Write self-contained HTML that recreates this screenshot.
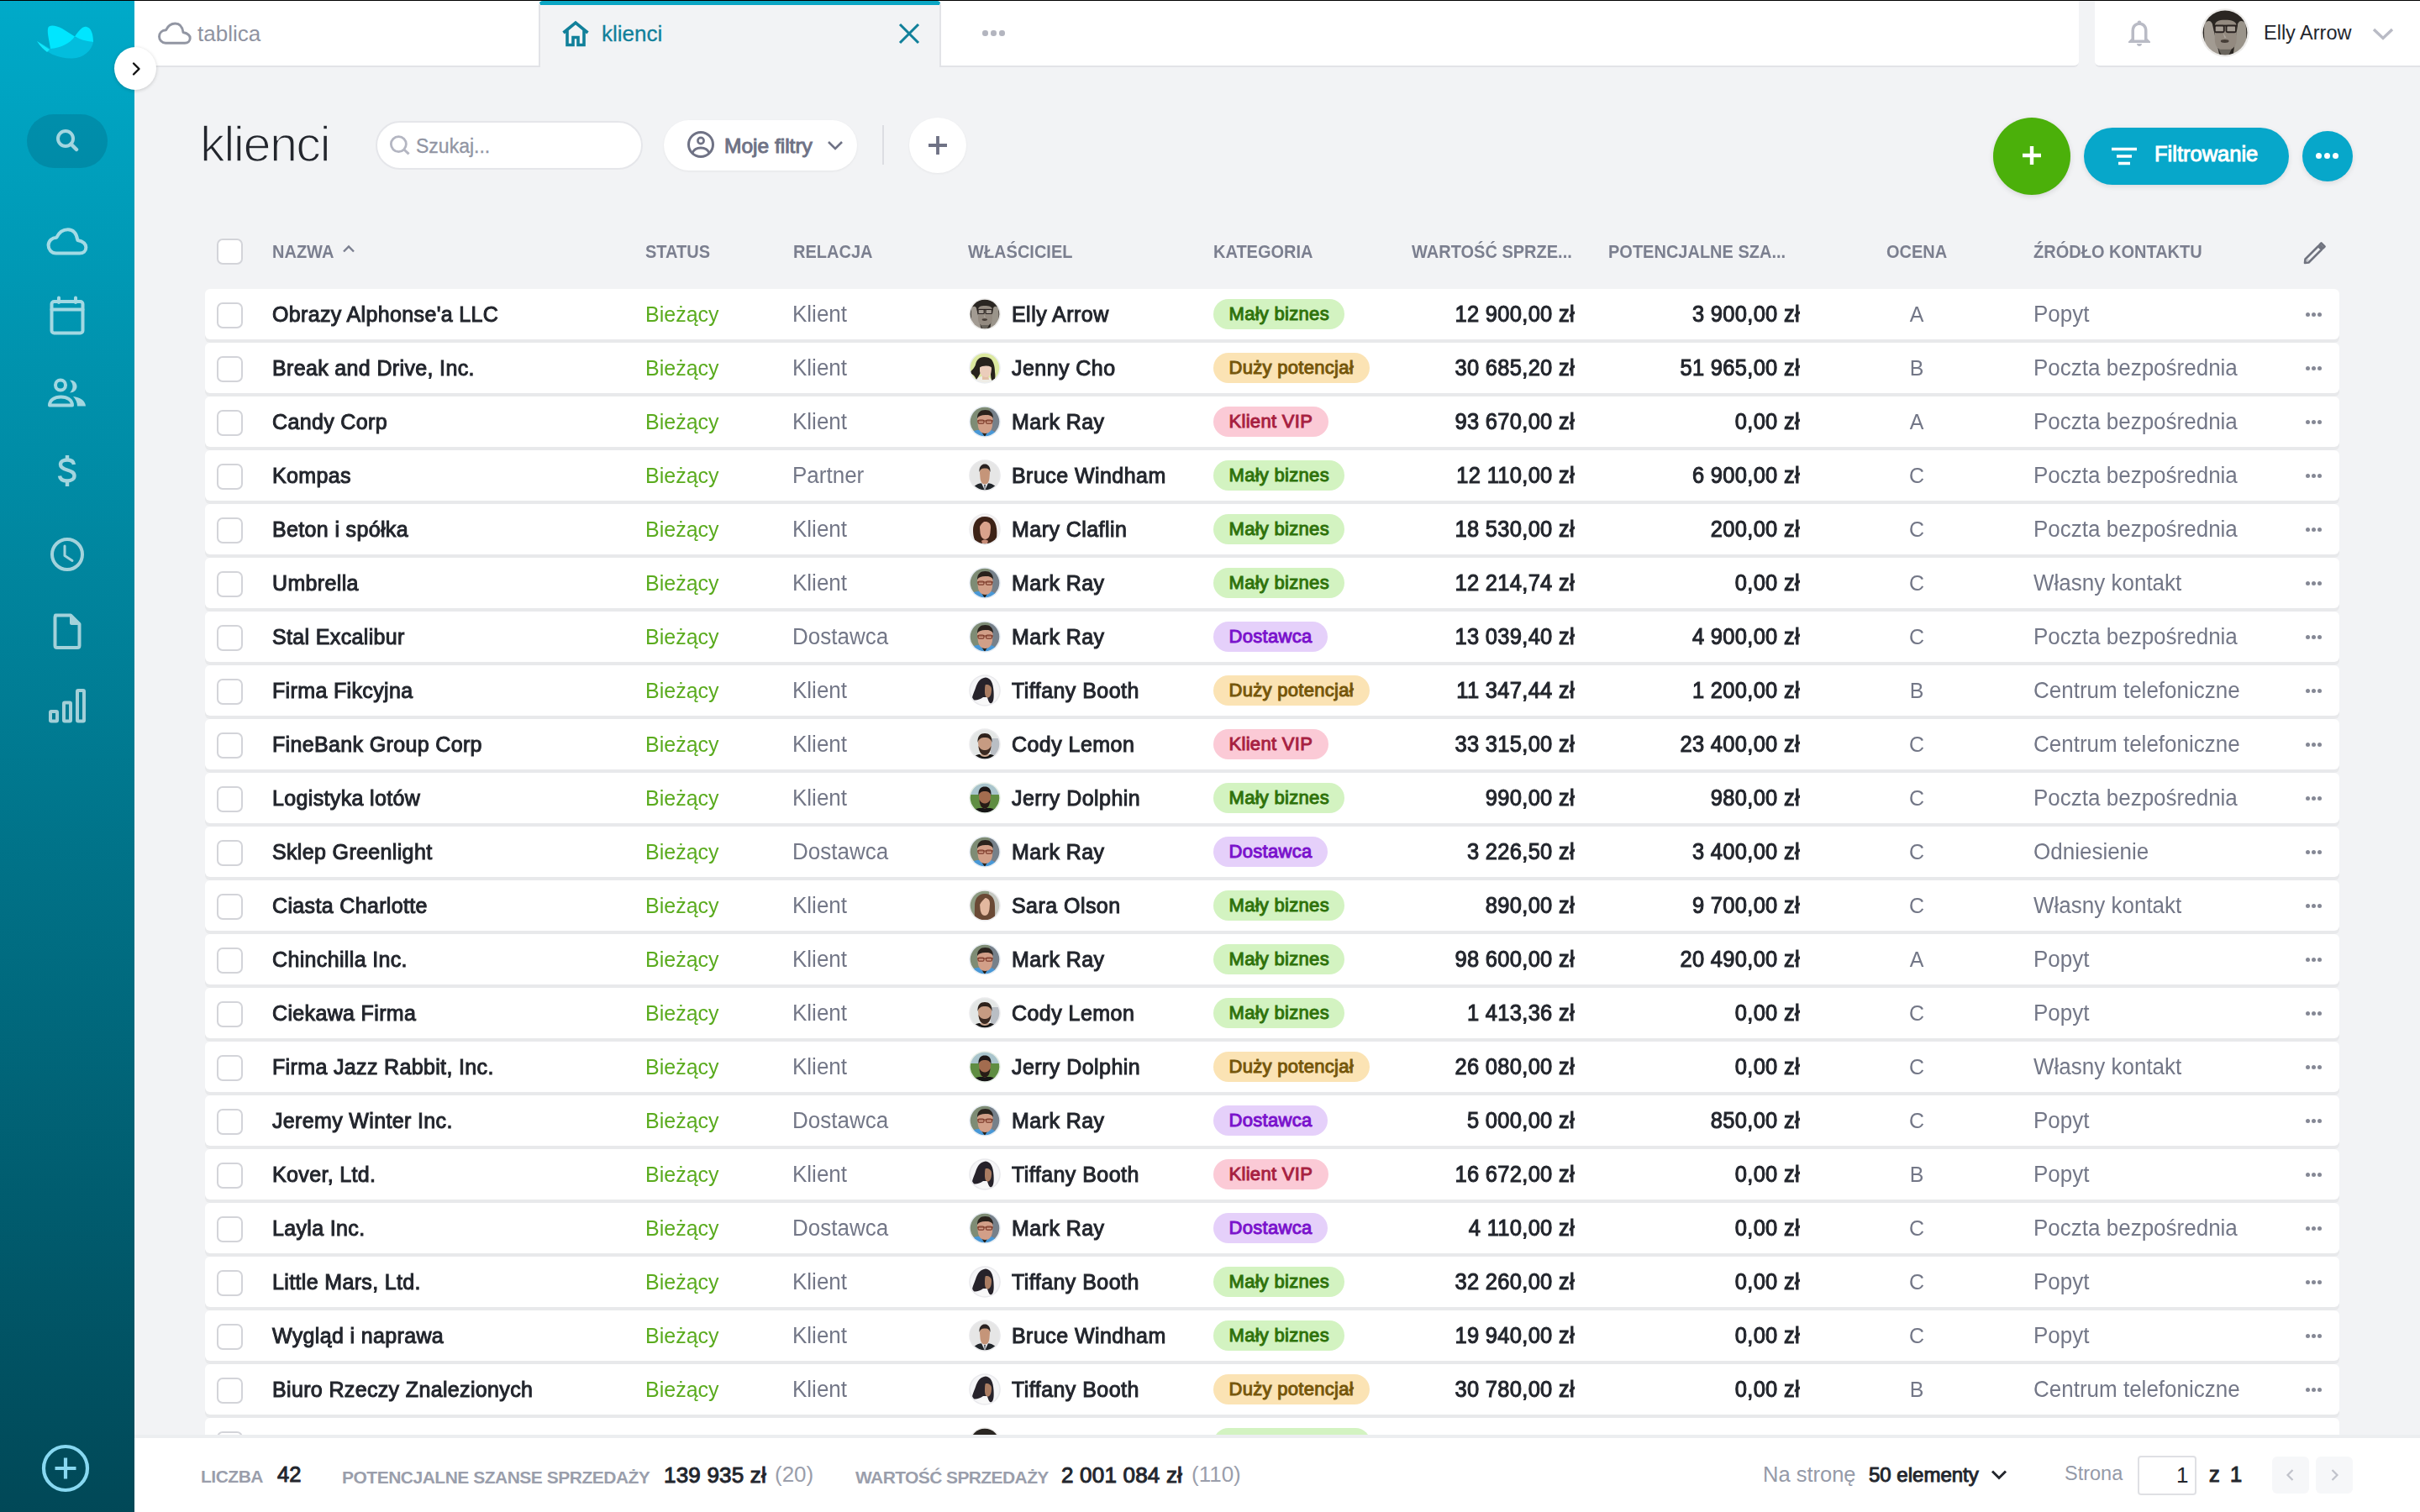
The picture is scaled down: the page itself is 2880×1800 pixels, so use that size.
<!DOCTYPE html>
<html><head><meta charset="utf-8">
<style>
*{box-sizing:border-box;margin:0;padding:0}
html,body{width:2880px;height:1800px;overflow:hidden;background:#f2f3f5;font-family:"Liberation Sans",sans-serif;color:#23262d}
.abs{position:absolute}
#topline{position:absolute;left:0;top:0;width:2880px;height:1px;background:#000;z-index:20}
#side{position:absolute;left:0;top:0;width:160px;height:1800px;background:linear-gradient(180deg,#00aac9 0%,#014857 100%);z-index:5}
#side svg{position:absolute}
.sic{fill:none;stroke:#fff;stroke-width:4;stroke-linecap:round;stroke-linejoin:round}
#tabbar{position:absolute;left:160px;top:0;width:2314px;height:80px;background:#fff;border-bottom:2px solid #e2e3e7;border-bottom-right-radius:6px}
#userbar{position:absolute;left:2493px;top:0;width:387px;height:80px;background:#fff;border-bottom:2px solid #e2e3e7;border-bottom-left-radius:6px}
#acttab{position:absolute;left:641px;top:1px;width:479px;height:79px;background:#f2f3f5;border-left:2px solid #e2e3e7;border-right:2px solid #e2e3e7;border-top:5px solid #0aa6c4;border-radius:5px 5px 0 0;z-index:2}
.t{position:absolute;white-space:nowrap;line-height:1}
.med{-webkit-text-stroke:1px currentColor}
#toggle{position:absolute;left:136px;top:56px;width:50px;height:51px;border-radius:50%;background:#fff;box-shadow:0 1px 4px rgba(0,0,0,0.18);z-index:10}
.pill{position:absolute;background:#fff;border-radius:40px}
.hdr{position:absolute;top:0;font-weight:bold;font-size:20px;color:#7b7f8f;line-height:1;white-space:nowrap;transform:scaleY(1.09);transform-origin:0 17px}
.card{position:absolute;left:244px;width:2540px;height:60px;background:#fff;border-radius:6px;box-shadow:0 4px 0 #e8e9eb}
.card .t{line-height:60px;top:0;transform:scaleY(1.06);transform-origin:0 38.7px}
.cb{position:absolute;left:14px;top:16px;width:31px;height:31px;border:2px solid #d3d4d9;border-radius:7px;background:#fff}
.nm{left:80px;font-size:25px;color:#23262d;letter-spacing:0.35px}
.st{left:524px;font-size:25px;color:#5aab1e}
.rl{left:699px;font-size:26px;color:#737787}
.av{position:absolute;left:909px;top:11px;width:38px;height:38px}
.ow{left:960px;font-size:25px;color:#23262d;letter-spacing:0.45px}
.bd{position:absolute;left:1200px;top:12px;height:36px;border-radius:18px;font-size:22px;line-height:36px;padding:0 18.5px;white-space:nowrap;letter-spacing:0.3px}
.b1{background:#d3f3c1;color:#2f720b}
.b2{background:#fbe3b4;color:#75560a}
.b3{background:#fbcad6;color:#a71f41}
.b4{background:#e5d0fa;color:#7a12cc}
.v1{right:910px;font-size:25.5px;color:#23262d;letter-spacing:0.3px}
.v2{right:642px;font-size:25.5px;color:#23262d;letter-spacing:0.3px}
.oc{left:1987px;width:100px;text-align:center;font-size:25px;color:#737787}
.zr{left:2176px;font-size:26px;color:#737787}
.dots{position:absolute;left:2500px;top:27px;width:20px;height:6px}
.dots i,.hdots i{position:absolute;top:0.5px;width:5px;height:5px;border-radius:50%;background:#858895}
#footer{position:absolute;left:160px;top:1708px;width:2720px;height:92px;background:#fff;border-top:4px solid #eceef0;z-index:4}
</style></head><body>
<svg width="0" height="0" style="position:absolute">
<defs>
<clipPath id="cc"><circle cx="19" cy="19" r="17.3"/></clipPath><filter id="bl" x="-10%" y="-10%" width="120%" height="120%"><feGaussianBlur stdDeviation="0.45"/></filter>
<symbol id="av-elly" viewBox="0 0 38 38"><circle cx="19" cy="19" r="18.8" fill="#ecebe9"/><g clip-path="url(#cc)"><g filter="url(#bl)"><rect width="38" height="38" fill="#2b2723"/><path d="M3,12 C5,9 8,9 9,12 L15,38 L6,38 C3,30 2,20 3,12 Z" fill="#a29b92"/><path d="M35,12 C33,9 30,9 29,12 L25,38 L33,38 C36,30 36,20 35,12 Z" fill="#9a948a"/><path d="M11,14 C11,10 14,9 19,9 C24,9 28,10 28,14 L28,24 C28,30 24,33 19,33 C14,33 11,30 11,24 Z" fill="#938a80"/><path d="M14,32 L24,32 L21,38 L17,38 Z" fill="#6b655d"/><path d="M10.5,13.5 H28.5" stroke="#2a2420" stroke-width="1.3"/><rect x="11" y="13.5" width="7.2" height="5" rx="1" fill="#a49c93" stroke="#2a2420" stroke-width="1.2"/><rect x="20" y="13.5" width="7.5" height="5" rx="1" fill="#a49c93" stroke="#2a2420" stroke-width="1.2"/><ellipse cx="18.8" cy="25.6" rx="3.2" ry="1.3" fill="#453c36"/><path d="M17.5,19 L18.5,23 L20,23 Z" fill="#b0a89f"/></g></g></symbol>
<symbol id="av-jenny" viewBox="0 0 38 38"><circle cx="19" cy="19" r="18.8" fill="#eceef0"/><g clip-path="url(#cc)"><g filter="url(#bl)"><rect width="38" height="38" fill="#dce9a0"/><path d="M5,38 C6,33 10,30 16,29 L24,30 C27,32 28,35 28,38 Z" fill="#efede6"/><path d="M16,27 L23,27 L24,33 L16,33 Z" fill="#e2c0a6"/><path d="M18,6 C12,6 9,10 8,15 C7,19 3,22 1,25 C4,26 7,28 9,33 C11,30 13,27 14,24 L26,24 C26,28 26,33 29,36 C31,34 32,30 31,24 C31,16 29,12 27,9 C25,7 22,6 18,6 Z" fill="#27221f"/><path d="M13,19 C13,16 15,15 20,15.5 C25,16 27,17 27,20 L26.5,24 C26,28 23,30 20,30 C16.5,30 13.5,27 13,23 Z" fill="#ebcdbb"/><path d="M12,17 C14,12 22,11 27,14 L27,18 C22,16 17,16 12,19 Z" fill="#27221f"/></g></g></symbol>
<symbol id="av-mark" viewBox="0 0 38 38"><circle cx="19" cy="19" r="18.8" fill="#e6ecf2"/><g clip-path="url(#cc)"><g filter="url(#bl)"><rect width="38" height="38" fill="#7e8c74"/><rect x="25" y="0" width="13" height="38" fill="#76808a"/><path d="M0,38 C1,31 6,29 12,29 L26,29 C31,30 34,33 34,38 Z" fill="#4a98d6"/><path d="M13,28 C15,31 19,37 19,37 C21,33 23,30 25,28 Z" fill="#23201e"/><path d="M10,17 C10,10 14,7 19.5,7 C25,7 28.5,10 28.5,17 L28,24 C27,30 24,33 19.5,33 C15,33 12,30 11,25 Z" fill="#d29f88"/><path d="M10,15 C10,8 14,5 19.5,5 C25,5 29,8 29,15 C27,11.5 24,11 19.5,11 C15,11 12,12 10,15 Z" fill="#29231f"/><path d="M10,18 H29" stroke="#7a3828" stroke-width="1"/><rect x="11" y="17" width="7" height="4.2" rx="1.5" fill="none" stroke="#7a3828" stroke-width="1.2"/><rect x="20.5" y="17" width="7" height="4.2" rx="1.5" fill="none" stroke="#7a3828" stroke-width="1.2"/></g></g></symbol>
<symbol id="av-bruce" viewBox="0 0 38 38"><circle cx="19" cy="19" r="18.8" fill="#e8e8ea"/><g clip-path="url(#cc)"><g filter="url(#bl)"><rect width="38" height="38" fill="#e6e6e6"/><path d="M3,38 C5,31 10,28 19,28 C28,28 33,31 35,38 Z" fill="#22252b"/><path d="M15,28 L19,37 L23,28 Z" fill="#e6eaef"/><path d="M18.2,30 L19,37 L19.8,30 Z" fill="#2b2f36"/><path d="M13,16 C13,10 15.5,7.5 19,7.5 C22.5,7.5 25,10 25,16 L24.5,22 C24,27 22,29.5 19,29.5 C16,29.5 14,27 13.5,22 Z" fill="#c59579"/><path d="M12.5,15 C12,8 15.5,5.5 19,5.5 C22.5,5.5 26,8 25.5,15 C24,11 22,10.5 19,10.5 C16,10.5 14,11 12.5,15 Z" fill="#2a2420"/></g></g></symbol>
<symbol id="av-mary" viewBox="0 0 38 38"><circle cx="19" cy="19" r="18.8" fill="#ededef"/><g clip-path="url(#cc)"><g filter="url(#bl)"><rect width="38" height="38" fill="#f2efee"/><path d="M19,4 C9,4 5,12 5,20 C5,28 7,34 11,38 L30,38 C33,33 34,26 33,18 C32,10 28,4 19,4 Z" fill="#3d2019"/><path d="M13,17 C13,12 15.5,10 19.5,10 C23.5,10 26,12 26,17 L25.5,23 C25,28 22.5,31 19.5,31 C16.5,31 14,28 13.5,23 Z" fill="#d9a28c"/><path d="M12,15 C13,9 17,7 21,8 C17,10 14,13 12,18 Z" fill="#3d2019"/><path d="M15,33 C17,31 21,31 23,33 L22,36 L16,36 Z" fill="#c78d78"/></g></g></symbol>
<symbol id="av-tiffany" viewBox="0 0 38 38"><circle cx="19" cy="19" r="18.8" fill="#e9e9ec"/><g clip-path="url(#cc)"><g filter="url(#bl)"><rect width="38" height="38" fill="#f5f5f7"/><path d="M8,38 C10,33 14,30 19,30 C25,30 29,33 31,38 Z" fill="#f8f8f8"/><path d="M20,3.5 C14,4 10,9 8,16 C6,22 3,27 4.5,30 C8,31.5 13,30 17,27 L22,27 C23,31 24,34 26.5,34.5 C29.5,33 30,28 29.5,20 C29,10 26,4 20,3.5 Z" fill="#25222a"/><path d="M20,12 C23,11.5 27,13 27,18 C27,23 25.5,27 23,27.5 C20.5,28 19,25 19,21 C19,17 19,13 20,12 Z" fill="#a97c62"/></g></g></symbol>
<symbol id="av-cody" viewBox="0 0 38 38"><circle cx="19" cy="19" r="18.8" fill="#ebebed"/><g clip-path="url(#cc)"><g filter="url(#bl)"><rect width="38" height="38" fill="#e3e6e5"/><rect x="26" y="12" width="12" height="22" fill="#b9bec4"/><path d="M2,38 C4,33 9,31 14,31 L24,31 C29,31 33,33 35,38 Z" fill="#161312"/><path d="M13,31 C15,35 23,35 25,31 Z" fill="#c9a690"/><path d="M11,17 C11,10 14.5,8 19,8 C23.5,8 27,10 27,17 L26.5,22 C26,28 23,32 19,32 C15,32 12,28 11.5,22 Z" fill="#c69b82"/><path d="M11.5,21 C12,28 15,32 19,32 C23,32 26,28 26.5,21 C24.5,25 22,26 19,26 C16,26 13.5,25 11.5,21 Z" fill="#3a2a21"/><path d="M10.5,17 C10,9 14,6 19,6 C24,6 28,9 27.5,17 C26,12 23,11 19,11 C15,11 12,12 10.5,17 Z" fill="#2e221b"/></g></g></symbol>
<symbol id="av-jerry" viewBox="0 0 38 38"><circle cx="19" cy="19" r="18.8" fill="#e6eee6"/><g clip-path="url(#cc)"><g filter="url(#bl)"><rect width="38" height="38" fill="#5e8d43"/><rect width="38" height="15" fill="#a9c4cc"/><path d="M2,38 C4,33 9,31 14,31 L24,31 C29,31 33,33 35,38 Z" fill="#181414"/><path d="M12,17 C12,11 15,9 19,9 C23,9 26,11 26,17 L25.5,22 C25,28 22.5,31.5 19,31.5 C15.5,31.5 13,28 12.5,22 Z" fill="#a36c50"/><path d="M12.5,21 C13,28 15.5,31.5 19,31.5 C22.5,31.5 25,28 25.5,21 C23.5,24.5 21.5,25.5 19,25.5 C16.5,25.5 14.5,24.5 12.5,21 Z" fill="#251b17"/><path d="M11.5,16 C11,8 14.5,5.5 19,5.5 C23.5,5.5 27,8 26.5,16 C25,12 22.5,11 19,11 C15.5,11 13,12 11.5,16 Z" fill="#1f1917"/></g></g></symbol>
<symbol id="av-sara" viewBox="0 0 38 38"><circle cx="19" cy="19" r="18.8" fill="#ecebed"/><g clip-path="url(#cc)"><g filter="url(#bl)"><rect width="38" height="38" fill="#8d9b82"/><rect x="24" y="0" width="14" height="38" fill="#c4c7c0"/><path d="M6,38 C8,33 13,31 19,31 C25,31 30,33 32,38 Z" fill="#efebe7"/><path d="M19,5 C10,5 7,12 7,20 C7,28 6,33 9,36 L29,36 C32,33 31,28 31,20 C31,12 28,5 19,5 Z" fill="#6b4836"/><path d="M13,17 C13,12 15.5,10 19,10 C22.5,10 25,12 25,17 L24.5,23 C24,28 22,31 19,31 C16,31 14,28 13.5,23 Z" fill="#e3b89f"/><path d="M12,16 C13,10 17,8.5 21,9 C18,11 15,14 12.5,19 Z" fill="#6b4836"/></g></g></symbol>
</defs></svg>
<div id="topline"></div>
<!-- SIDEBAR -->
<div id="side">
  <svg style="left:36px;top:20px" width="90" height="60" viewBox="0 0 90 60">
    <path d="M8,29 C18,44 35,50 50,49.5 C64,49 73,40 75,30 L53,24 L24,38 Z" fill="#03bddd"/>
    <path d="M21,14 C22,9 30,10 38,14 L53,23.5 C47,32 36,37 24,38 C23,30 20,20 21,14 Z" fill="#00e6ff"/>
    <path d="M53,23.5 C58,16 63,11 67,12 C73,13 75,22 75,30 C66,29 59,27 53,23.5 Z" fill="#00e6ff"/>
    <path d="M8,29 C12,35 16,39 20,42 L23,39 Z" fill="#10e8fb"/>
  </svg>
  <div class="abs" style="left:32px;top:136px;width:96px;height:64px;border-radius:32px;background:rgba(0,40,60,0.16)"></div>
  <svg style="left:60px;top:148px;opacity:.64" width="40" height="40" viewBox="0 0 40 40"><g class="sic"><circle cx="18" cy="17" r="9"/><path d="M24.5,23.5 L31,30" style="stroke-width:4.5"/></g></svg>
  <!-- cloud -->
  <svg style="left:46.2px;top:261.3px;opacity:.64" width="73.2" height="53.7" viewBox="0 0 60 44"><path class="sic" style="stroke-width:3.3" d="M17,33.2 C12.5,33.2 9.5,29.5 9.5,25.5 C9.5,21 13,18 17.5,17.8 C20,12.5 24,10 28.5,10 C33.5,10 37,13.5 38,20.5 C42.5,21.5 46.2,24 46.2,27.5 C46.2,31 43.5,33.2 40,33.2 Z"/></svg>
  <!-- calendar -->
  <svg style="left:58px;top:352px;opacity:.64" width="44" height="48" viewBox="0 0 44 48"><g class="sic"><rect x="3.5" y="7" width="37" height="37.5" rx="3"/><path d="M3.5,16.5 H40.5 M12,2.5 V8 M32,2.5 V8"/></g></svg>
  <!-- people -->
  <svg style="left:55px;top:449px;opacity:.64" width="50" height="38" viewBox="0 0 50 38"><g class="sic"><circle cx="17" cy="9.5" r="6"/><path d="M4,33.5 C4,27 10,23.5 17.5,23.5 C25,23.5 31,27 31,33.5 Z"/></g><path d="M28,3.5 C33,3.5 36.5,7 36.5,11 C36.5,15 33,18.5 28,18.5 C30.5,16 31.5,13.5 31.5,11 C31.5,8.5 30.5,6 28,3.5 Z" fill="#fff"/><path d="M32,23 C40,24 46.5,27.5 47,34.5 H37 C37,30 35,26 32,23 Z" fill="#fff"/></svg>
  <!-- dollar -->
  <svg style="left:66px;top:540px;opacity:.64" width="28" height="42" viewBox="0 0 28 42"><g class="sic" style="stroke-width:4.4;stroke-linecap:butt"><path d="M22,13 C21.5,9.5 18.5,7.5 14,7.5 C9.5,7.5 6,9.5 6,13 C6,16.5 9,18 14,19.5 C19,21 22.5,22.5 22.5,26.5 C22.5,30 19,32.5 14,32.5 C9,32.5 5.5,30.5 5,26.5"/><path d="M14,2 V7.5 M14,32.5 V39"/></g></svg>
  <!-- clock -->
  <svg style="left:58px;top:638px;opacity:.64" width="44" height="44" viewBox="0 0 44 44"><g class="sic"><circle cx="22" cy="22" r="18"/><path d="M19,12 V23.5 L28,29.5" style="stroke-width:3"/></g></svg>
  <!-- document -->
  <svg style="left:61px;top:729px;opacity:.64" width="38" height="46" viewBox="0 0 38 46"><path class="sic" d="M5,3.5 H23 L33.5,14 V39.5 C33.5,41 32.5,42 31,42 H7 C5.5,42 4.5,41 4.5,39.5 V6 C4.5,4.5 5.5,3.5 7,3.5 Z"/><path d="M22,3 L34,15 H24 C23,15 22,14 22,13 Z" fill="#fff"/></svg>
  <!-- bars -->
  <svg style="left:55px;top:817px;opacity:.64" width="50" height="46" viewBox="0 0 50 46"><g class="sic" style="stroke-width:4"><rect x="5" y="30" width="8" height="11.5" rx="1"/><rect x="21" y="19.5" width="8" height="22" rx="1"/><rect x="37" y="5" width="8" height="36.5" rx="1"/></g></svg>
  <!-- plus circle -->
  <svg style="left:46px;top:1716px" width="64" height="64" viewBox="0 0 64 64"><circle cx="32" cy="32" r="26" fill="none" stroke="#88d8f1" stroke-width="4.2"/><path d="M32,19.5 V44.5 M19.5,32 H44.5" stroke="#88d8f1" stroke-width="4.2"/></svg>
</div>
<!-- TAB BAR -->
<div id="tabbar"></div>
<div id="userbar"></div>
<div id="acttab"></div>
<div id="toggle"><svg style="position:absolute;left:17px;top:17px" width="18" height="18" viewBox="0 0 18 18"><path d="M6,2.5 L12.5,9 L6,15.5" fill="none" stroke="#111" stroke-width="2.4" stroke-linecap="round" stroke-linejoin="round"/></svg></div>
<!-- tab contents -->
<svg class="abs" style="left:180px;top:18px" width="60" height="44" viewBox="0 0 60 44"><path d="M17,33.2 C12.5,33.2 9.5,29.5 9.5,25.5 C9.5,21 13,18 17.5,17.8 C20,12.5 24,10 28.5,10 C33.5,10 37,13.5 38,20.5 C42.5,21.5 46.2,24 46.2,27.5 C46.2,31 43.5,33.2 40,33.2 Z" fill="none" stroke="#9296a3" stroke-width="2.9" stroke-linejoin="round"/></svg>
<div class="t" style="left:235px;top:27px;font-size:26px;color:#8f93a1">tablica</div>
<svg class="abs" style="left:666px;top:24px;z-index:3" width="38" height="32" viewBox="0 0 38 32"><path d="M4.5,15 L19,3 L33.5,15 M9,11.5 V29.5 H16 V20.5 H22 V29.5 H29 V11.5" fill="none" stroke="#11809a" stroke-width="3.6" stroke-linejoin="miter"/></svg>
<div class="t med" style="left:716px;top:26.5px;font-size:26px;color:#11809a;z-index:3;-webkit-text-stroke:0.3px #11809a">klienci</div>
<svg class="abs" style="left:1068px;top:26px;z-index:3" width="28" height="28" viewBox="0 0 28 28"><path d="M3,3 L25,25 M25,3 L3,25" stroke="#11809a" stroke-width="3.1"/></svg>
<div class="abs hdots" style="left:1169px;top:35.5px;width:30px;height:7px"><i style="left:0;background:#b3b5bf;width:6.5px;height:6.5px"></i><i style="left:10px;background:#b3b5bf;width:6.5px;height:6.5px"></i><i style="left:20px;background:#b3b5bf;width:6.5px;height:6.5px"></i></div>
<svg class="abs" style="left:2530px;top:21px" width="32" height="36" viewBox="0 0 32 36"><path d="M16,3.5 C17.5,3.5 18.3,4.5 18.3,5.7 C23,6.8 25.5,10.5 25.5,15.5 V25 L29,28.5 V30 H3 V28.5 L6.5,25 V15.5 C6.5,10.5 9,6.8 13.7,5.7 C13.7,4.5 14.5,3.5 16,3.5 Z M10,15.5 V26.5 H22 V15.5 C22,11.5 19.5,9 16,9 C12.5,9 10,11.5 10,15.5 Z M13,31 H19 C19,32.8 17.5,34 16,34 C14.5,34 13,32.8 13,31 Z" fill="#b9bbc5" fill-rule="evenodd"/></svg>
<svg class="abs" style="left:2619px;top:10px" width="58" height="58" viewBox="0 0 38 38"><use href="#av-elly"/></svg>
<div class="t" style="left:2694px;top:28px;font-size:23.5px;color:#23262d">Elly Arrow</div>
<svg class="abs" style="left:2822px;top:31px" width="28" height="18" viewBox="0 0 28 18"><path d="M3,4 L14,14.5 L25,4" fill="none" stroke="#b9bbc5" stroke-width="3.4"/></svg>
<!-- TITLE ROW -->
<div class="t" style="left:238px;top:141.5px;font-size:59.5px;color:#23262d;letter-spacing:-1.6px;-webkit-text-stroke:1.6px #f2f3f5">klienci</div>
<div class="pill" style="left:447px;top:144px;width:318px;height:58px;border:2px solid #e5e6ea"></div>
<svg class="abs" style="left:462px;top:160px" width="28" height="28" viewBox="0 0 28 28"><circle cx="12.35" cy="11.6" r="9" fill="none" stroke="#b4b6c2" stroke-width="2.8"/><path d="M18.8,18 L24.6,23.4" stroke="#b4b6c2" stroke-width="3"/></svg>
<div class="t" style="left:495px;top:163px;font-size:23px;color:#9195a3;-webkit-text-stroke:0.3px #9195a3">Szukaj...</div>
<div class="pill" style="left:790px;top:143px;width:230px;height:60px;box-shadow:0 1px 3px rgba(0,0,0,0.06)"></div>
<svg class="abs" style="left:815px;top:153px" width="38" height="38" viewBox="0 0 38 38"><circle cx="19" cy="19" r="14.5" fill="none" stroke="#6f7285" stroke-width="3"/><circle cx="19" cy="14.5" r="3.6" fill="none" stroke="#6f7285" stroke-width="2.6"/><path d="M9,29 C11,24.5 14.5,23 19,23 C23.5,23 27,24.5 29,29" fill="none" stroke="#6f7285" stroke-width="3"/></svg>
<div class="t med" style="left:862px;top:161.8px;font-size:24.5px;color:#6f7285">Moje filtry</div>
<svg class="abs" style="left:983px;top:165px" width="22" height="16" viewBox="0 0 22 16"><path d="M3,4 L11,12 L19,4" fill="none" stroke="#6f7285" stroke-width="2.6"/></svg>
<div class="abs" style="left:1050px;top:149px;width:2px;height:47px;background:#dcdde2"></div>
<div class="pill" style="left:1082px;top:140px;width:68px;height:66px;border-radius:50%;box-shadow:0 1px 3px rgba(0,0,0,0.05)"></div>
<svg class="abs" style="left:1103px;top:160px" width="26" height="26" viewBox="0 0 26 26"><path d="M13,2 V24 M2,13 H24" stroke="#6f7285" stroke-width="3.8"/></svg>
<!-- right buttons -->
<div class="abs" style="left:2372px;top:140px;width:92px;height:92px;border-radius:50%;background:#4bb00a;box-shadow:0 2px 6px rgba(0,0,0,0.12)"></div>
<svg class="abs" style="left:2405px;top:172px" width="26" height="26" viewBox="0 0 26 26"><path d="M13,2 V24 M2,13 H24" stroke="#fff" stroke-width="4.4"/></svg>
<div class="abs" style="left:2480px;top:152px;width:244px;height:68px;border-radius:34px;background:#07a7ca;box-shadow:0 2px 6px rgba(0,0,0,0.10)"></div>
<svg class="abs" style="left:2511px;top:174px" width="34" height="24" viewBox="0 0 34 24"><path d="M2,3.5 H32 M8,12 H26 M10,20.5 H24" stroke="#fff" stroke-width="3.6"/></svg>
<div class="t med" style="left:2564px;top:171.1px;font-size:25.5px;color:#fff">Filtrowanie</div>
<div class="abs" style="left:2740px;top:156px;width:60px;height:60px;border-radius:50%;background:#07a7ca;box-shadow:0 2px 6px rgba(0,0,0,0.10)"></div>
<div class="abs hdots" style="left:2756px;top:181px;width:30px;height:7px"><i style="left:0;background:#fff;width:7px;height:7px"></i><i style="left:10px;background:#fff;width:7px;height:7px"></i><i style="left:20px;background:#fff;width:7px;height:7px"></i></div>
<!-- TABLE -->
<div class="abs" style="left:258px;top:284px;width:31px;height:31px;border:2px solid #d3d4d9;border-radius:7px;background:#fff"></div>
<div id="hdrrow" class="abs" style="left:0;top:290px;width:2880px;height:20px">
<div class="hdr" style="left:324px">NAZWA</div>
<svg class="abs" style="left:406px;top:0px" width="18" height="12" viewBox="0 0 18 12"><path d="M3,9.5 L9,3.5 L15,9.5" fill="none" stroke="#7b7f8f" stroke-width="2.4"/></svg>
<div class="hdr" style="left:768px">STATUS</div>
<div class="hdr" style="left:944px">RELACJA</div>
<div class="hdr" style="left:1152px">WŁAŚCICIEL</div>
<div class="hdr" style="left:1444px">KATEGORIA</div>
<div class="hdr" style="left:1680px">WARTOŚĆ SPRZE...</div>
<div class="hdr" style="left:1914px">POTENCJALNE SZA...</div>
<div class="hdr" style="left:2245px">OCENA</div>
<div class="hdr" style="left:2420px">ŹRÓDŁO KONTAKTU</div>
</div>
<svg class="abs" style="left:2740px;top:288px" width="28" height="28" viewBox="0 0 28 28"><path d="M3,25 L3.5,20.5 L19,5 L23,9 L7.5,24.5 Z M6,21.5 L6.3,22 M20.5,3.5 L22.5,1.5 L26.5,5.5 L24.5,7.5 Z" fill="none" stroke="#70737f" stroke-width="2.6" stroke-linejoin="round"/></svg>
<div class="card" style="top:344px"><div class="cb"></div><div class="t nm med">Obrazy Alphonse'a LLC</div><div class="t st">Bieżący</div><div class="t rl">Klient</div><svg class="av" viewBox="0 0 38 38"><use href="#av-elly"/></svg><div class="t ow med">Elly Arrow</div><div class="bd b1 med">Mały biznes</div><div class="t v1 med">12 900,00 zł</div><div class="t v2 med">3 900,00 zł</div><div class="t oc">A</div><div class="t zr">Popyt</div><div class="dots"><i style="left:0"></i><i style="left:7px"></i><i style="left:14px"></i></div></div>
<div class="card" style="top:408px"><div class="cb"></div><div class="t nm med">Break and Drive, Inc.</div><div class="t st">Bieżący</div><div class="t rl">Klient</div><svg class="av" viewBox="0 0 38 38"><use href="#av-jenny"/></svg><div class="t ow med">Jenny Cho</div><div class="bd b2 med">Duży potencjał</div><div class="t v1 med">30 685,20 zł</div><div class="t v2 med">51 965,00 zł</div><div class="t oc">B</div><div class="t zr">Poczta bezpośrednia</div><div class="dots"><i style="left:0"></i><i style="left:7px"></i><i style="left:14px"></i></div></div>
<div class="card" style="top:472px"><div class="cb"></div><div class="t nm med">Candy Corp</div><div class="t st">Bieżący</div><div class="t rl">Klient</div><svg class="av" viewBox="0 0 38 38"><use href="#av-mark"/></svg><div class="t ow med">Mark Ray</div><div class="bd b3 med">Klient VIP</div><div class="t v1 med">93 670,00 zł</div><div class="t v2 med">0,00 zł</div><div class="t oc">A</div><div class="t zr">Poczta bezpośrednia</div><div class="dots"><i style="left:0"></i><i style="left:7px"></i><i style="left:14px"></i></div></div>
<div class="card" style="top:536px"><div class="cb"></div><div class="t nm med">Kompas</div><div class="t st">Bieżący</div><div class="t rl">Partner</div><svg class="av" viewBox="0 0 38 38"><use href="#av-bruce"/></svg><div class="t ow med">Bruce Windham</div><div class="bd b1 med">Mały biznes</div><div class="t v1 med">12 110,00 zł</div><div class="t v2 med">6 900,00 zł</div><div class="t oc">C</div><div class="t zr">Poczta bezpośrednia</div><div class="dots"><i style="left:0"></i><i style="left:7px"></i><i style="left:14px"></i></div></div>
<div class="card" style="top:600px"><div class="cb"></div><div class="t nm med">Beton i spółka</div><div class="t st">Bieżący</div><div class="t rl">Klient</div><svg class="av" viewBox="0 0 38 38"><use href="#av-mary"/></svg><div class="t ow med">Mary Claflin</div><div class="bd b1 med">Mały biznes</div><div class="t v1 med">18 530,00 zł</div><div class="t v2 med">200,00 zł</div><div class="t oc">C</div><div class="t zr">Poczta bezpośrednia</div><div class="dots"><i style="left:0"></i><i style="left:7px"></i><i style="left:14px"></i></div></div>
<div class="card" style="top:664px"><div class="cb"></div><div class="t nm med">Umbrella</div><div class="t st">Bieżący</div><div class="t rl">Klient</div><svg class="av" viewBox="0 0 38 38"><use href="#av-mark"/></svg><div class="t ow med">Mark Ray</div><div class="bd b1 med">Mały biznes</div><div class="t v1 med">12 214,74 zł</div><div class="t v2 med">0,00 zł</div><div class="t oc">C</div><div class="t zr">Własny kontakt</div><div class="dots"><i style="left:0"></i><i style="left:7px"></i><i style="left:14px"></i></div></div>
<div class="card" style="top:728px"><div class="cb"></div><div class="t nm med">Stal Excalibur</div><div class="t st">Bieżący</div><div class="t rl">Dostawca</div><svg class="av" viewBox="0 0 38 38"><use href="#av-mark"/></svg><div class="t ow med">Mark Ray</div><div class="bd b4 med">Dostawca</div><div class="t v1 med">13 039,40 zł</div><div class="t v2 med">4 900,00 zł</div><div class="t oc">C</div><div class="t zr">Poczta bezpośrednia</div><div class="dots"><i style="left:0"></i><i style="left:7px"></i><i style="left:14px"></i></div></div>
<div class="card" style="top:792px"><div class="cb"></div><div class="t nm med">Firma Fikcyjna</div><div class="t st">Bieżący</div><div class="t rl">Klient</div><svg class="av" viewBox="0 0 38 38"><use href="#av-tiffany"/></svg><div class="t ow med">Tiffany Booth</div><div class="bd b2 med">Duży potencjał</div><div class="t v1 med">11 347,44 zł</div><div class="t v2 med">1 200,00 zł</div><div class="t oc">B</div><div class="t zr">Centrum telefoniczne</div><div class="dots"><i style="left:0"></i><i style="left:7px"></i><i style="left:14px"></i></div></div>
<div class="card" style="top:856px"><div class="cb"></div><div class="t nm med">FineBank Group Corp</div><div class="t st">Bieżący</div><div class="t rl">Klient</div><svg class="av" viewBox="0 0 38 38"><use href="#av-cody"/></svg><div class="t ow med">Cody Lemon</div><div class="bd b3 med">Klient VIP</div><div class="t v1 med">33 315,00 zł</div><div class="t v2 med">23 400,00 zł</div><div class="t oc">C</div><div class="t zr">Centrum telefoniczne</div><div class="dots"><i style="left:0"></i><i style="left:7px"></i><i style="left:14px"></i></div></div>
<div class="card" style="top:920px"><div class="cb"></div><div class="t nm med">Logistyka lotów</div><div class="t st">Bieżący</div><div class="t rl">Klient</div><svg class="av" viewBox="0 0 38 38"><use href="#av-jerry"/></svg><div class="t ow med">Jerry Dolphin</div><div class="bd b1 med">Mały biznes</div><div class="t v1 med">990,00 zł</div><div class="t v2 med">980,00 zł</div><div class="t oc">C</div><div class="t zr">Poczta bezpośrednia</div><div class="dots"><i style="left:0"></i><i style="left:7px"></i><i style="left:14px"></i></div></div>
<div class="card" style="top:984px"><div class="cb"></div><div class="t nm med">Sklep Greenlight</div><div class="t st">Bieżący</div><div class="t rl">Dostawca</div><svg class="av" viewBox="0 0 38 38"><use href="#av-mark"/></svg><div class="t ow med">Mark Ray</div><div class="bd b4 med">Dostawca</div><div class="t v1 med">3 226,50 zł</div><div class="t v2 med">3 400,00 zł</div><div class="t oc">C</div><div class="t zr">Odniesienie</div><div class="dots"><i style="left:0"></i><i style="left:7px"></i><i style="left:14px"></i></div></div>
<div class="card" style="top:1048px"><div class="cb"></div><div class="t nm med">Ciasta Charlotte</div><div class="t st">Bieżący</div><div class="t rl">Klient</div><svg class="av" viewBox="0 0 38 38"><use href="#av-sara"/></svg><div class="t ow med">Sara Olson</div><div class="bd b1 med">Mały biznes</div><div class="t v1 med">890,00 zł</div><div class="t v2 med">9 700,00 zł</div><div class="t oc">C</div><div class="t zr">Własny kontakt</div><div class="dots"><i style="left:0"></i><i style="left:7px"></i><i style="left:14px"></i></div></div>
<div class="card" style="top:1112px"><div class="cb"></div><div class="t nm med">Chinchilla Inc.</div><div class="t st">Bieżący</div><div class="t rl">Klient</div><svg class="av" viewBox="0 0 38 38"><use href="#av-mark"/></svg><div class="t ow med">Mark Ray</div><div class="bd b1 med">Mały biznes</div><div class="t v1 med">98 600,00 zł</div><div class="t v2 med">20 490,00 zł</div><div class="t oc">A</div><div class="t zr">Popyt</div><div class="dots"><i style="left:0"></i><i style="left:7px"></i><i style="left:14px"></i></div></div>
<div class="card" style="top:1176px"><div class="cb"></div><div class="t nm med">Ciekawa Firma</div><div class="t st">Bieżący</div><div class="t rl">Klient</div><svg class="av" viewBox="0 0 38 38"><use href="#av-cody"/></svg><div class="t ow med">Cody Lemon</div><div class="bd b1 med">Mały biznes</div><div class="t v1 med">1 413,36 zł</div><div class="t v2 med">0,00 zł</div><div class="t oc">C</div><div class="t zr">Popyt</div><div class="dots"><i style="left:0"></i><i style="left:7px"></i><i style="left:14px"></i></div></div>
<div class="card" style="top:1240px"><div class="cb"></div><div class="t nm med">Firma Jazz Rabbit, Inc.</div><div class="t st">Bieżący</div><div class="t rl">Klient</div><svg class="av" viewBox="0 0 38 38"><use href="#av-jerry"/></svg><div class="t ow med">Jerry Dolphin</div><div class="bd b2 med">Duży potencjał</div><div class="t v1 med">26 080,00 zł</div><div class="t v2 med">0,00 zł</div><div class="t oc">C</div><div class="t zr">Własny kontakt</div><div class="dots"><i style="left:0"></i><i style="left:7px"></i><i style="left:14px"></i></div></div>
<div class="card" style="top:1304px"><div class="cb"></div><div class="t nm med">Jeremy Winter Inc.</div><div class="t st">Bieżący</div><div class="t rl">Dostawca</div><svg class="av" viewBox="0 0 38 38"><use href="#av-mark"/></svg><div class="t ow med">Mark Ray</div><div class="bd b4 med">Dostawca</div><div class="t v1 med">5 000,00 zł</div><div class="t v2 med">850,00 zł</div><div class="t oc">C</div><div class="t zr">Popyt</div><div class="dots"><i style="left:0"></i><i style="left:7px"></i><i style="left:14px"></i></div></div>
<div class="card" style="top:1368px"><div class="cb"></div><div class="t nm med">Kover, Ltd.</div><div class="t st">Bieżący</div><div class="t rl">Klient</div><svg class="av" viewBox="0 0 38 38"><use href="#av-tiffany"/></svg><div class="t ow med">Tiffany Booth</div><div class="bd b3 med">Klient VIP</div><div class="t v1 med">16 672,00 zł</div><div class="t v2 med">0,00 zł</div><div class="t oc">B</div><div class="t zr">Popyt</div><div class="dots"><i style="left:0"></i><i style="left:7px"></i><i style="left:14px"></i></div></div>
<div class="card" style="top:1432px"><div class="cb"></div><div class="t nm med">Layla Inc.</div><div class="t st">Bieżący</div><div class="t rl">Dostawca</div><svg class="av" viewBox="0 0 38 38"><use href="#av-mark"/></svg><div class="t ow med">Mark Ray</div><div class="bd b4 med">Dostawca</div><div class="t v1 med">4 110,00 zł</div><div class="t v2 med">0,00 zł</div><div class="t oc">C</div><div class="t zr">Poczta bezpośrednia</div><div class="dots"><i style="left:0"></i><i style="left:7px"></i><i style="left:14px"></i></div></div>
<div class="card" style="top:1496px"><div class="cb"></div><div class="t nm med">Little Mars, Ltd.</div><div class="t st">Bieżący</div><div class="t rl">Klient</div><svg class="av" viewBox="0 0 38 38"><use href="#av-tiffany"/></svg><div class="t ow med">Tiffany Booth</div><div class="bd b1 med">Mały biznes</div><div class="t v1 med">32 260,00 zł</div><div class="t v2 med">0,00 zł</div><div class="t oc">C</div><div class="t zr">Popyt</div><div class="dots"><i style="left:0"></i><i style="left:7px"></i><i style="left:14px"></i></div></div>
<div class="card" style="top:1560px"><div class="cb"></div><div class="t nm med">Wygląd i naprawa</div><div class="t st">Bieżący</div><div class="t rl">Klient</div><svg class="av" viewBox="0 0 38 38"><use href="#av-bruce"/></svg><div class="t ow med">Bruce Windham</div><div class="bd b1 med">Mały biznes</div><div class="t v1 med">19 940,00 zł</div><div class="t v2 med">0,00 zł</div><div class="t oc">C</div><div class="t zr">Popyt</div><div class="dots"><i style="left:0"></i><i style="left:7px"></i><i style="left:14px"></i></div></div>
<div class="card" style="top:1624px"><div class="cb"></div><div class="t nm med">Biuro Rzeczy Znalezionych</div><div class="t st">Bieżący</div><div class="t rl">Klient</div><svg class="av" viewBox="0 0 38 38"><use href="#av-tiffany"/></svg><div class="t ow med">Tiffany Booth</div><div class="bd b2 med">Duży potencjał</div><div class="t v1 med">30 780,00 zł</div><div class="t v2 med">0,00 zł</div><div class="t oc">B</div><div class="t zr">Centrum telefoniczne</div><div class="dots"><i style="left:0"></i><i style="left:7px"></i><i style="left:14px"></i></div></div>
<div class="card" style="top:1688px"><div class="cb"></div><div class="t nm med"></div><div class="t st"></div><div class="t rl"></div><svg class="av" viewBox="0 0 38 38"><use href="#av-elly"/></svg><div class="t ow med"></div><div class="bd b1 med" style="width:187px">Mały biznes</div><div class="t v1 med"></div><div class="t v2 med"></div><div class="t oc"></div><div class="t zr"></div></div>
<!-- /TABLE -->
<!-- FOOTER -->
<div id="footer">
<div class="t" style="left:79px;top:35px;font-size:21px;letter-spacing:-0.5px;font-weight:bold;color:#9a9eab">LICZBA</div>
<div class="t med" style="left:170px;top:31.4px;font-size:25.5px;color:#23262d">42</div>
<div class="t" style="left:247px;top:36px;font-size:21px;letter-spacing:-0.5px;font-weight:bold;color:#9a9eab">POTENCJALNE SZANSE SPRZEDAŻY</div>
<div class="t med" style="left:630px;top:31px;font-size:26px;color:#23262d;letter-spacing:0.2px">139 935 zł</div>
<div class="t" style="left:762px;top:30px;font-size:26px;color:#9a9eab">(20)</div>
<div class="t" style="left:858px;top:36px;font-size:21px;letter-spacing:-0.6px;font-weight:bold;color:#9a9eab">WARTOŚĆ SPRZEDAŻY</div>
<div class="t med" style="left:1103px;top:31px;font-size:26px;color:#23262d;letter-spacing:0.2px">2 001 084 zł</div>
<div class="t" style="left:1258px;top:30px;font-size:26px;color:#9a9eab">(110)</div>
<div class="t" style="left:1938px;top:31px;font-size:25.5px;color:#959aa8">Na stronę</div>
<div class="t med" style="left:2064px;top:32.1px;font-size:24px;color:#23262d">50 elementy</div>
<svg class="abs" style="left:2208px;top:36px" width="22" height="16" viewBox="0 0 22 16"><path d="M3,3.5 L11,11.5 L19,3.5" fill="none" stroke="#23262d" stroke-width="3"/></svg>
<div class="t" style="left:2297px;top:31px;font-size:23.5px;color:#959aa8">Strona</div>
<div class="abs" style="left:2384px;top:21px;width:70px;height:47px;border:2px solid #dfe0e4;border-radius:4px;background:#fff"></div>
<div class="t" style="left:2430px;top:31px;font-size:26px;color:#23262d">1</div>
<div class="t med" style="left:2469px;top:30.8px;font-size:25.5px;color:#23262d">z</div>
<div class="t med" style="left:2494px;top:30.8px;font-size:25.5px;color:#23262d">1</div>
<div class="abs" style="left:2544px;top:22px;width:44px;height:44px;border-radius:6px;background:#f6f7f9"></div>
<svg class="abs" style="left:2557px;top:35px" width="18" height="18" viewBox="0 0 18 18"><path d="M11.5,3 L5.5,9 L11.5,15" fill="none" stroke="#c1c3cb" stroke-width="2.2"/></svg>
<div class="abs" style="left:2596px;top:22px;width:44px;height:44px;border-radius:6px;background:#f6f7f9"></div>
<svg class="abs" style="left:2609px;top:35px" width="18" height="18" viewBox="0 0 18 18"><path d="M6.5,3 L12.5,9 L6.5,15" fill="none" stroke="#c1c3cb" stroke-width="2.2"/></svg>
</div>
</body></html>
